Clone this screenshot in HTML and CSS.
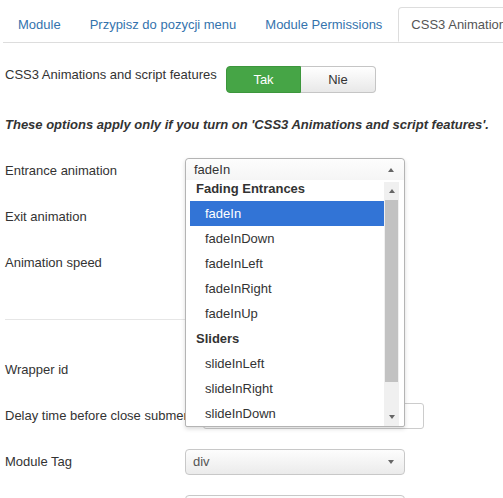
FILE: index.html
```html
<!DOCTYPE html>
<html>
<head>
<meta charset="utf-8">
<link rel="stylesheet" href="styles.css">
</head>
<body>
<div class="page">
  <ul class="tabs">
    <li class="tab"><span class="tab-link">Module</span></li>
    <li class="tab"><span class="tab-link">Przypisz do pozycji menu</span></li>
    <li class="tab"><span class="tab-link">Module Permissions</span></li>
    <li class="tab active"><span class="tab-link">CSS3 Animations</span></li>
  </ul>

  <div class="content">
    <div class="toggle-row">
      <div class="toggle-label">CSS3 Animations and script features</div>
      <div class="toggle">
        <span class="toggle-btn on">Tak</span>
        <span class="toggle-btn off">Nie</span>
      </div>
    </div>

    <p class="note">These options apply only if you turn on 'CSS3 Animations and script features'.</p>

    <div class="group">
      <div class="label">Entrance animation</div>
      <div class="select"><span></span><i class="caret down"></i></div>
    </div>
    <div class="group">
      <div class="label">Exit animation</div>
      <div class="select"><span></span><i class="caret down"></i></div>
    </div>
    <div class="group">
      <div class="label">Animation speed</div>
      <div class="select"><span></span><i class="caret down"></i></div>
    </div>

    <hr class="sep">

    <div class="group">
      <div class="label">Wrapper id</div>
      <div class="input"></div>
    </div>
    <div class="group">
      <div class="label">Delay time before close submenu</div>
      <div class="input wide"></div>
    </div>
    <div class="group">
      <div class="label">Module Tag</div>
      <div class="select"><span>div</span><i class="caret down"></i></div>
    </div>
    <div class="group">
      <div class="label"></div>
      <div class="select"><span></span><i class="caret down"></i></div>
    </div>
  </div>

  <div class="dropdown">
    <div class="dd-head"><span>fadeIn</span><i class="caret up"></i></div>
    <div class="dd-body">
      <div class="dd-list">
        <div class="dd-group first">Fading Entrances</div>
        <div class="dd-opt selected">fadeIn</div>
        <div class="dd-opt">fadeInDown</div>
        <div class="dd-opt">fadeInLeft</div>
        <div class="dd-opt">fadeInRight</div>
        <div class="dd-opt">fadeInUp</div>
        <div class="dd-group">Sliders</div>
        <div class="dd-opt">slideInLeft</div>
        <div class="dd-opt">slideInRight</div>
        <div class="dd-opt">slideInDown</div>
      </div>
      <div class="scrollbar">
        <div class="sb-btn"><i class="caret up"></i></div>
        <div class="sb-track"><div class="sb-thumb"></div></div>
        <div class="sb-btn"><i class="caret down"></i></div>
      </div>
    </div>
  </div>
</div>
</body>
</html>
```

FILE: styles.css
```css
html, body {
  margin: 0;
  padding: 0;
  background: #fff;
  overflow: hidden;
}
body {
  font-family: "Liberation Sans", Arial, sans-serif;
  font-size: 13px;
  line-height: 18px;
  color: #333;
}
.page {
  position: relative;
  width: 503px;
  height: 498px;
  overflow: hidden;
}

/* tabs */
.tabs {
  list-style: none;
  margin: 7px 0 0 3px;
  padding: 0 0 0 2px;
  display: flex;
  flex-wrap: nowrap;
  border-bottom: 1px solid #ddd;
  height: 35px;
  white-space: nowrap;
}
.tab {
  margin-right: 3px;
  flex: none;
}
.tab-link {
  display: block;
  padding: 8px 12px;
  border: 1px solid transparent;
  border-radius: 4px 4px 0 0;
  color: #3473ad;
  line-height: 17px;
}
.tab.active .tab-link {
  color: #555;
  background: #fff;
  border-color: #ddd #ddd #fff #ddd;
}

/* content */
.content {
  padding: 0 5px;
}
.toggle-row {
  display: flex;
  margin-top: 23px;
}
.toggle-label {
  width: 221px;
  flex: none;
  line-height: 17px;
}
.toggle {
  display: flex;
  height: 27px;
}
.toggle-btn {
  width: 75px;
  box-sizing: border-box;
  text-align: center;
  line-height: 25px;
  border: 1px solid #c5c5c5;
}
.toggle-btn.on {
  background: #46a546;
  border-color: #3c963c;
  color: #fff;
  border-radius: 4px 0 0 4px;
}
.toggle-btn.off {
  background: linear-gradient(#ffffff, #e8e8e8);
  color: #333;
  border-left: none;
  border-radius: 0 4px 4px 0;
}
.note {
  margin: 23px 0 24px;
  font-weight: bold;
  font-style: italic;
  line-height: 18px;
}

.group {
  display: flex;
  margin-bottom: 20px;
  height: 26px;
}
.label {
  width: 180px;
  flex: none;
  padding-top: 4px;
  white-space: nowrap;
}
.select {
  width: 220px;
  height: 26px;
  box-sizing: border-box;
  border: 1px solid #c8c8c8;
  border-radius: 4px;
  background: linear-gradient(#fdfdfd, #ebebeb);
  display: flex;
  align-items: center;
  justify-content: space-between;
  padding: 0 10px 0 7px;
  color: #555;
}
.input {
  width: 220px;
  height: 26px;
  box-sizing: border-box;
  border: 1px solid #ccc;
  border-radius: 3px;
  background: #fff;
}
.input.wide {
  margin-left: 18px;
  width: 221px;
}
.sep {
  border: none;
  border-top: 1px solid #e6e6e6;
  margin: 43px 0 37px;
  width: 390px;
  margin-left: 0;
  height: 0;
}

.caret {
  display: block;
  width: 0;
  height: 0;
  border-left: 3.5px solid transparent;
  border-right: 3.5px solid transparent;
}
.caret.down {
  border-top: 4px solid #666;
}
.caret.up {
  border-bottom: 4px solid #666;
}

/* open dropdown overlay */
.dropdown {
  position: absolute;
  left: 185px;
  top: 158px;
  width: 220px;
  height: 269px;
  box-sizing: border-box;
  border: 1px solid #b4b4b4;
  border-radius: 4px 4px 2px 2px;
  background: #fff;
  box-shadow: 0 2px 4px rgba(0,0,0,0.15);
}
.dd-head {
  height: 21px;
  display: flex;
  align-items: center;
  justify-content: space-between;
  padding: 0 10px 0 8px;
  color: #333;
  background: linear-gradient(#fdfdfd, #f5f5f5);
  border-radius: 4px 4px 0 0;
}
.dd-body {
  display: flex;
  padding-left: 4px;
  height: 246px;
}
.dd-list {
  width: 194px;
  flex: none;
}
.dd-group {
  height: 25px;
  line-height: 25px;
  padding-left: 6px;
  font-weight: bold;
  color: #333;
}
.dd-group.first {
  height: 21px;
  line-height: 18px;
}
.dd-opt {
  height: 25px;
  line-height: 25px;
  padding-left: 15px;
  color: #333;
}
.dd-opt.selected {
  background: #3274d6;
  color: #fff;
}
.scrollbar {
  width: 15px;
  flex: none;
  display: flex;
  flex-direction: column;
  background: #f0f0f0;
  margin-top: 2px;
}
.sb-btn {
  height: 18px;
  display: flex;
  align-items: center;
  justify-content: center;
  flex: none;
}
.sb-track {
  flex: 1;
}
.sb-thumb {
  margin: 0 1px;
  height: 182px;
  background: #c2c2c2;
}
```
